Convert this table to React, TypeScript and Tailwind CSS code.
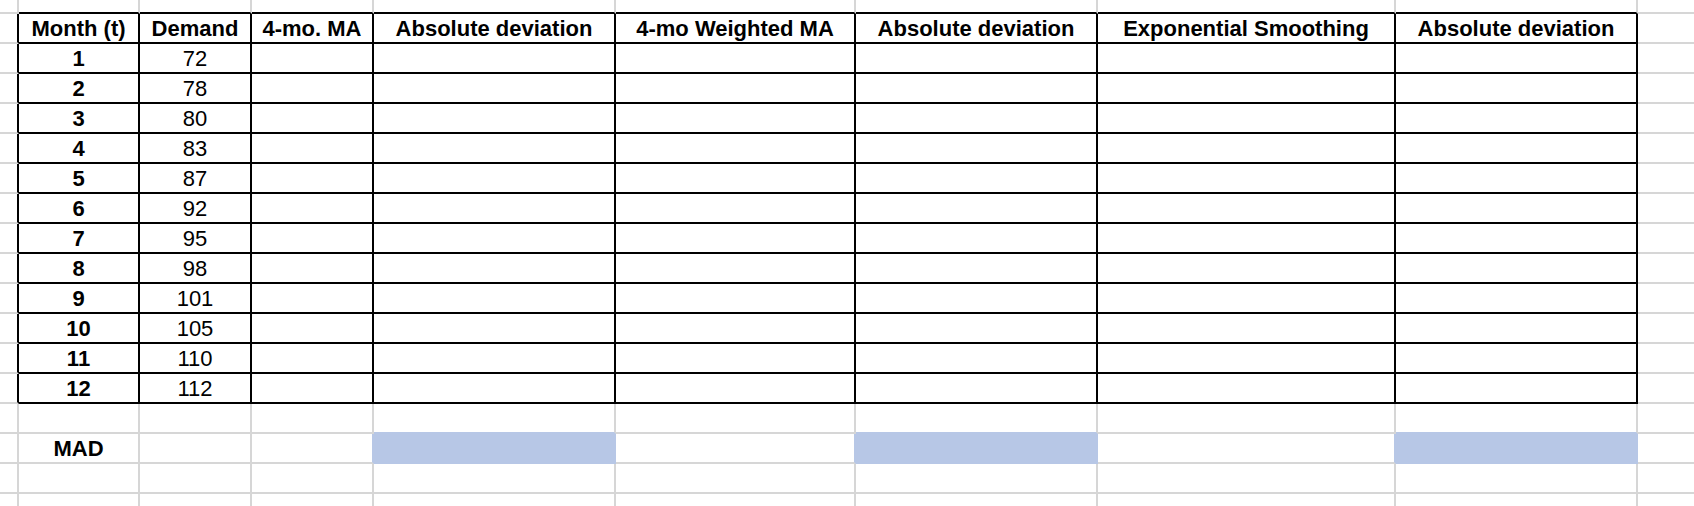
import clsx from 'clsx';

const headers = [
  'Month (t)',
  'Demand',
  '4-mo. MA',
  'Absolute deviation',
  '4-mo Weighted MA',
  'Absolute deviation',
  'Exponential Smoothing',
  'Absolute deviation',
];

const demand = [72, 78, 80, 83, 87, 92, 95, 98, 101, 105, 110, 112];

const ROWS = 18;
const COLS = 10;
const MAD_ROW = 15;
const madColumns = [4, 6, 8];

type CellText = { text: string; bold: boolean } | null;

function cellText(row: number, col: number): CellText {
  if (row === 1 && col >= 1 && col <= 8) return { text: headers[col - 1], bold: true };
  if (row >= 2 && row <= 13) {
    if (col === 1) return { text: String(row - 1), bold: true };
    if (col === 2) return { text: String(demand[row - 2]), bold: false };
  }
  if (row === MAD_ROW && col === 1) return { text: 'MAD', bold: true };
  return null;
}

function Cell({ row, col }: { row: number; col: number }) {
  const inTableRows = row >= 1 && row <= 13;
  const rightBlack = inTableRows && col <= 8;
  const bottomBlack = row <= 13 && col >= 1 && col <= 8;
  const lastCol = col === COLS - 1;

  const isBlue = row === MAD_ROW && madColumns.includes(col);
  const rightBlue = isBlue || (row === MAD_ROW && madColumns.includes(col + 1));
  const bottomBlue = isBlue || (row === MAD_ROW - 1 && madColumns.includes(col));

  const content = cellText(row, col);

  return (
    <div
      className={clsx(
        'flex items-center justify-center overflow-hidden whitespace-nowrap border-b-2',
        !lastCol && 'border-r-2',
        isBlue ? 'bg-[#b7c7e6]' : 'bg-white',
        rightBlack ? 'border-r-black' : rightBlue ? 'border-r-[#b7c7e6]' : 'border-r-[#d6d6d6]',
        bottomBlack ? 'border-b-black' : bottomBlue ? 'border-b-[#b7c7e6]' : 'border-b-[#d6d6d6]'
      )}
    >
      {content && <span className={clsx(content.bold && 'font-bold')}>{content.text}</span>}
    </div>
  );
}

export default function App() {
  const cells = [];
  for (let row = 0; row < ROWS; row++) {
    for (let col = 0; col < COLS; col++) {
      cells.push(<Cell key={`${row}-${col}`} row={row} col={col} />);
    }
  }

  return (
    <div className="h-[506px] w-full overflow-hidden bg-white font-['Liberation_Sans',Arial,sans-serif] text-[22px] text-black">
      <div className="grid grid-cols-[19px_121px_112px_122px_242px_240px_242px_298px_242px_1fr] grid-rows-[14px_repeat(17,30px)]">
        {cells}
      </div>
    </div>
  );
}
